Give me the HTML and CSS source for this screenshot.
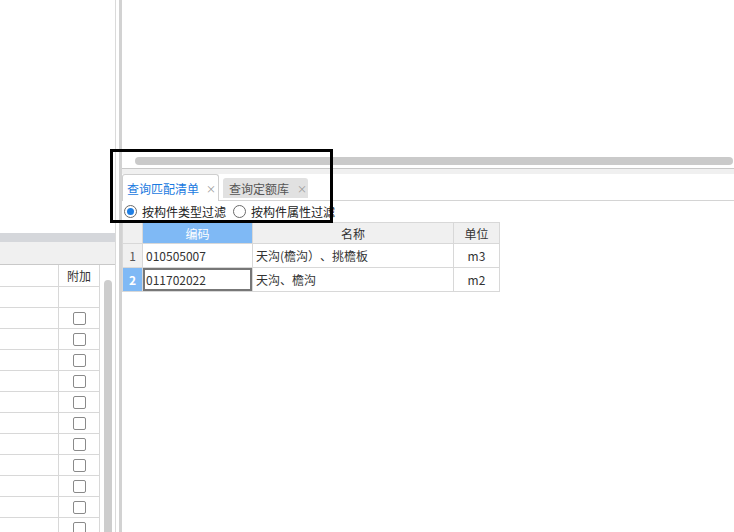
FILE: index.html
```html
<!DOCTYPE html>
<html lang="zh-CN">
<head>
    <meta charset="UTF-8">
    <title>查询匹配清单</title>
    <link rel="stylesheet" href="styles.css">
</head>
<body>
    <div class="app">
        <div class="left">
            <div class="left-top"></div>
            <div class="left-bar"></div>
            <div class="left-toolbar"></div>
            <div class="left-body">
                <div class="left-table">
                    <div class="lrow lhead">
                        <div class="lcell lname"></div>
                        <div class="lcell lcheck">附加</div>
                    </div>
                    <div class="lrow"><div class="lcell lname"></div><div class="lcell lcheck"></div></div>
                    <div class="lrow"><div class="lcell lname"></div><div class="lcell lcheck"><span class="box"></span></div></div>
                    <div class="lrow"><div class="lcell lname"></div><div class="lcell lcheck"><span class="box"></span></div></div>
                    <div class="lrow"><div class="lcell lname"></div><div class="lcell lcheck"><span class="box"></span></div></div>
                    <div class="lrow"><div class="lcell lname"></div><div class="lcell lcheck"><span class="box"></span></div></div>
                    <div class="lrow"><div class="lcell lname"></div><div class="lcell lcheck"><span class="box"></span></div></div>
                    <div class="lrow"><div class="lcell lname"></div><div class="lcell lcheck"><span class="box"></span></div></div>
                    <div class="lrow"><div class="lcell lname"></div><div class="lcell lcheck"><span class="box"></span></div></div>
                    <div class="lrow"><div class="lcell lname"></div><div class="lcell lcheck"><span class="box"></span></div></div>
                    <div class="lrow"><div class="lcell lname"></div><div class="lcell lcheck"><span class="box"></span></div></div>
                    <div class="lrow"><div class="lcell lname"></div><div class="lcell lcheck"><span class="box"></span></div></div>
                    <div class="lrow"><div class="lcell lname"></div><div class="lcell lcheck"><span class="box"></span></div></div>
                </div>
                <div class="vscroll"><div class="vthumb"></div></div>
            </div>
        </div>

        <div class="divider"></div>

        <div class="right">
            <div class="r-view"></div>
            <div class="hscroll"><div class="hthumb"></div></div>
            <div class="tab-band"></div>
            <div class="tabs">
                <div class="tab active">查询匹配清单<span class="close">×</span></div>
                <div class="tab">查询定额库<span class="close">×</span></div>
            </div>
            <div class="filters">
                <label class="radio"><span class="dot checked"></span>按构件类型过滤</label>
                <label class="radio"><span class="dot"></span>按构件属性过滤</label>
            </div>
            <div class="grid">
                <div class="grow ghead">
                    <div class="gcell gnum"></div>
                    <div class="gcell gcode sel-col">编码</div>
                    <div class="gcell gname center">名称</div>
                    <div class="gcell gunit">单位</div>
                </div>
                <div class="grow">
                    <div class="gcell gnum">1</div>
                    <div class="gcell gcode">010505007</div>
                    <div class="gcell gname">天沟(檐沟）、挑檐板</div>
                    <div class="gcell gunit">m3</div>
                </div>
                <div class="grow">
                    <div class="gcell gnum sel-row">2</div>
                    <div class="gcell gcode current">011702022</div>
                    <div class="gcell gname">天沟、檐沟</div>
                    <div class="gcell gunit">m2</div>
                </div>
            </div>
        </div>

        <div class="mark"></div>
    </div>
</body>
</html>
```

FILE: styles.css
```css
body {
    margin: 0;
    background-color: #fff;
    color: #333;
    font-family: "Noto Sans CJK SC", "Microsoft YaHei", sans-serif;
    font-size: 12px;
    text-spacing-trim: space-all;
    overflow: hidden;
}

.app {
    position: relative;
    display: flex;
    width: 734px;
    height: 532px;
}

/* left panel */
.left {
    display: flex;
    flex-direction: column;
    width: 115px;
}

.left-top {
    height: 233px;
}

.left-bar {
    height: 9px;
    background-color: #d5d7db;
}

.left-toolbar {
    height: 22px;
    background-color: #f0f0f0;
    border-bottom: 1px solid #c9c9c9;
}

.left-body {
    display: flex;
    flex: 1;
    overflow: hidden;
}

.left-table {
    width: 99px;
    border-right: 1px solid #d8d8d8;
}

.lrow {
    display: flex;
    height: 20px;
    border-bottom: 1px solid #d8d8d8;
}

.lhead {
    height: 21px;
    line-height: 21px;
}

.lcell {
    display: flex;
    align-items: center;
    justify-content: center;
}

.lname {
    width: 58px;
    border-right: 1px solid #d8d8d8;
}

.lcheck {
    flex: 1;
}

.box {
    width: 11px;
    height: 11px;
    border: 1px solid #8a8a8a;
    border-radius: 2px;
}

.vscroll {
    flex: 1;
    padding: 15px 0 0 4px;
}

.vthumb {
    width: 8px;
    height: 300px;
    background-color: #cdcdcd;
    border-radius: 4px 4px 0 0;
}

.divider {
    width: 3px;
    border-left: 1px solid #dadada;
    border-right: 3px solid #d2d2d2;
}

/* right panel */
.right {
    display: flex;
    flex-direction: column;
    flex: 1;
}

.r-view {
    height: 154px;
}

.hscroll {
    height: 11px;
    padding: 3px 1px 0 13px;
    border-bottom: 1px solid #c8c8c8;
}

.hthumb {
    height: 8px;
    background-color: #cacaca;
    border-radius: 4px;
}

.tab-band {
    height: 5px;
    background-color: #f0f0f0;
}

.tabs {
    display: flex;
    align-items: flex-start;
    height: 26px;
}

.tab {
    display: flex;
    align-items: center;
    flex-shrink: 0;
    box-sizing: border-box;
    width: 85px;
    height: 20px;
    margin-top: 4px;
    margin-left: 4px;
    padding-left: 6px;
    background-color: #e1e1e1;
    color: #555;
    border-radius: 3px 3px 0 0;
    white-space: nowrap;
    overflow: hidden;
}

.tab .close {
    margin-left: 8px;
}

.tab.active {
    width: 97px;
    height: 27px;
    margin-top: 0;
    margin-left: 0;
    padding-left: 4px;
    background-color: #fff;
    color: #1a7ae0;
    border: 1px solid #cfcfcf;
    border-bottom: none;
    position: relative;
    z-index: 1;
}

.tab.active .close {
    margin-left: 7px;
}

.close {
    font-size: 10px;
    color: #999;
}

.filters {
    display: flex;
    align-items: center;
    height: 21px;
    padding-left: 2px;
    border-top: 1px solid #d4d4d4;
    color: #222;
}

.radio {
    display: flex;
    align-items: center;
    margin-right: 7px;
}

.dot {
    display: flex;
    align-items: center;
    justify-content: center;
    width: 11px;
    height: 11px;
    border: 1px solid #6a6a6a;
    border-radius: 50%;
    margin-right: 5px;
}

.dot.checked::after {
    content: "";
    width: 7px;
    height: 7px;
    border-radius: 50%;
    background-color: #1f7fe4;
}

.grid {
    width: 378px;
    border-top: 1px solid #d8d8d8;
}

.grow {
    display: flex;
    height: 23px;
    border-bottom: 1px solid #d8d8d8;
}

.ghead {
    height: 20px;
}

.gcell {
    display: flex;
    align-items: center;
    box-sizing: border-box;
    border-right: 1px solid #d8d8d8;
    padding-left: 3px;
}

.ghead .gcell {
    justify-content: center;
    padding-left: 0;
    background-color: #f0f0f0;
    color: #333;
}

.gnum {
    width: 21px;
    justify-content: center;
    padding-left: 0;
    background-color: #f0f0f0;
    color: #555;
    border-left: 1px solid #d8d8d8;
}

.gcode {
    width: 110px;
}

.gname {
    width: 201px;
}

.gunit {
    width: 46px;
    justify-content: center;
    padding-left: 0;
}

.ghead .sel-col {
    background-color: #7fb9f5;
    color: #fff;
}

.sel-row {
    background-color: #7fb9f5;
    color: #fff;
    font-weight: bold;
}

.current {
    box-shadow: inset 0 0 0 2px #777;
}

/* annotation frame drawn over the tab area */
.mark {
    position: absolute;
    left: 110px;
    top: 149px;
    width: 223px;
    height: 74px;
    box-sizing: border-box;
    border: 3px solid #000;
    pointer-events: none;
}
```
